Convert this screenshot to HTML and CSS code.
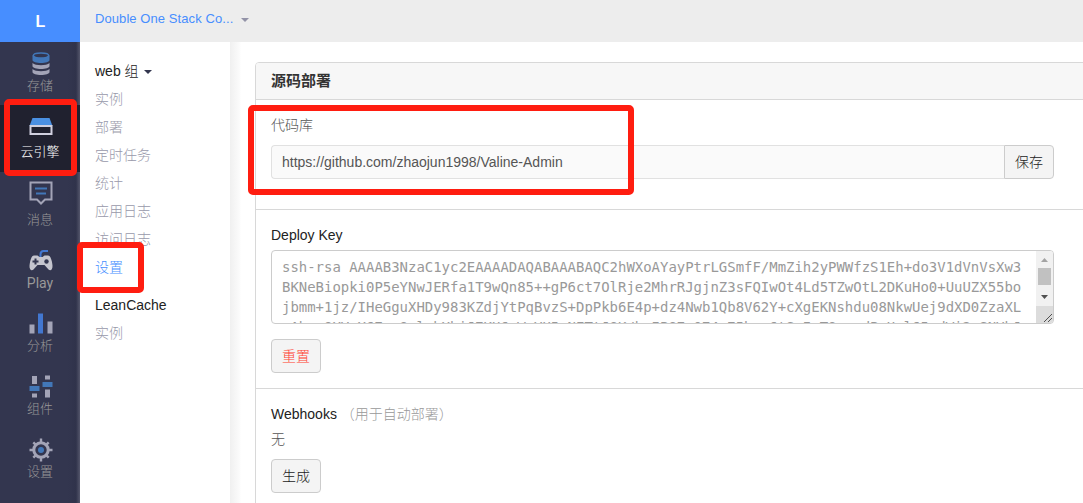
FILE: index.html
```
<!DOCTYPE html>
<html lang="zh-CN">
<head>
<meta charset="utf-8">
<title>云引擎 - 设置</title>
<link rel="stylesheet" href="styles.css">
</head>
<body>
<div class="app">
  <nav class="rail">
    <div class="logo">L</div>
    <a class="rail-item">
      <svg width="24" height="24" viewBox="0 0 24 24"><path d="M3.500 17v3c0 4 17 4 17 0v-3c-3 3-14 3-17 0z" fill="#a3a4b7"/><path d="M3.500 11v3c0 4 17 4 17 0v-3c-3 3-14 3-17 0z" fill="#a3a4b7"/><path d="M3.500 3.500v4.500c0 4 17 4 17 0v-4.500z" fill="#4277b8"/><ellipse cx="12" cy="3.500" rx="7.700" ry="2.600" fill="#33364f" stroke="#4277b8" stroke-width="1.500"/></svg>
      <span>存储</span>
    </a>
    <a class="rail-item active">
      <svg width="24" height="24" viewBox="0 0 24 24"><path d="M3.500 3h17l3 8H.5z" fill="#4a90e2"/><path d="M1.500 11h21v8h-21z" fill="#20212f" stroke="#d0d0df" stroke-width="2"/></svg>
      <span>云引擎</span>
    </a>
    <a class="rail-item message">
      <svg width="24" height="24" viewBox="0 0 24 24"><path d="M1.500 1.500h21v17h-6.500l-4 4-4-4H1.500z" fill="none" stroke="#a3a4b7" stroke-width="2"/><path d="M6 7.500h12M7 12.500h10" stroke="#4277b8" stroke-width="2"/></svg>
      <span>消息</span>
    </a>
    <a class="rail-item play">
      <svg width="24" height="24" viewBox="0 0 24 24"><path d="M11.500 8V5.500q0-3.500 3-3.500H19" fill="none" stroke="#4277d0" stroke-width="2"/><path d="M5 6.500h3.500L10.500 8h3l2-1.500H19c2.500 0 4 5 4.500 10 .3 4-2 6-4 4l-4-4.500h-7l-4 4.500c-2 2-4.300 0-4-4C1 11.500 2.500 6.500 5 6.500z" fill="#c5c5ce"/><path d="M6.500 9.500v6M3.500 12.500h6" stroke="#33364f" stroke-width="2"/><circle cx="17.500" cy="12.500" r="2.200" fill="#33364f"/></svg>
      <span>Play</span>
    </a>
    <a class="rail-item">
      <svg width="24" height="24" viewBox="0 0 24 24"><path d="M.5 12.500h5v9h-5zM18.500 9.500h5v12h-5z" fill="#a3a4b7"/><path d="M9 1.500h5v20H9z" fill="#4277d0"/></svg>
      <span>分析</span>
    </a>
    <a class="rail-item">
      <svg width="24" height="24" viewBox="0 0 24 24"><path d="M3 1h5v8H3zM3 18.500h5v4H3zM16 .5h5v4h-5zM16 14.500h5v8h-5z" fill="#a3a4b7"/><path d="M.5 11h10v5H.5zM13.500 7h10v5h-10z" fill="#4277b8"/></svg>
      <span>组件</span>
    </a>
    <a class="rail-item">
      <svg width="24" height="24" viewBox="0 0 24 24"><circle cx="12" cy="12" r="7.200" fill="none" stroke="#a3a4b7" stroke-width="3"/><path d="M12 .5v4M12 19.500v4M.5 12h4M19.500 12h4M4.300 4.300l3 3M16.700 16.700l3 3M4.300 19.700l3-3M16.700 7.300l3-3" stroke="#a3a4b7" stroke-width="2.400" /><circle cx="12" cy="12" r="3" fill="#4277b8"/></svg>
      <span>设置</span>
    </a>
  </nav>
  <div class="workspace">
    <header class="topbar"><span>Double One Stack Co...</span><i class="caret"></i></header>
    <div class="columns">
      <aside class="submenu">
        <h4>web 组<i class="caret dark"></i></h4>
        <a>实例</a>
        <a>部署</a>
        <a>定时任务</a>
        <a>统计</a>
        <a>应用日志</a>
        <a>访问日志</a>
        <a class="current">设置</a>
        <h4 class="second">LeanCache</h4>
        <a>实例</a>
      </aside>
      <main>
        <section class="panel">
          <h3>源码部署</h3>
          <div class="repo">
            <label>代码库</label>
            <div class="input-group"><div class="field">https://github.com/zhaojun1998/Valine-Admin</div><button>保存</button></div>
          </div>
          <div class="deploy">
            <label>Deploy Key</label>
            <div class="keybox">
              <div class="key">ssh-rsa AAAAB3NzaC1yc2EAAAADAQABAAABAQC2hWXoAYayPtrLGSmfF/MmZih2yPWWfzS1Eh+do3V1dVnVsXw3<br>BKNeBiopki0P5eYNwJERfa1T9wQn85++gP6ct7OlRje2MhrRJgjnZ3sFQIwOt4Ld5TZwOtL2DKuHo0+UuUZX55bo<br>jbmm+1jz/IHeGguXHDy983KZdjYtPqBvzS+DpPkb6E4p+dz4Nwb1Qb8V62Y+cXgEKNshdu08NkwUej9dXD0ZzaXL<br>eAbsu8XVeX67ao8olabXbiJ7KU6cWaYU5eNETtJ8K/buIP87e074e75bcs6tSeIeT8esudPsUol65xdWi2eSNVbJ</div>
              <svg class="scroll" width="17" height="72" viewBox="0 0 17 72"><path d="M0 0h17v55H0z" fill="#f1f1f1"/><path d="M0 55h17v17H0z" fill="#dcdcdc"/><path d="M5 11l3.500-4 3.500 4z" fill="#a3a3a3"/><path d="M2 17h13v17H2z" fill="#c1c1c1"/><path d="M5 44h7l-3.500 4z" fill="#505050"/><path d="M8 71l8-8M12 71l4-4" stroke="#505050" stroke-width="1"/></svg>
            </div>
            <button class="danger">重置</button>
          </div>
          <div class="hooks">
            <label>Webhooks <span>（用于自动部署）</span></label>
            <p>无</p>
            <button>生成</button>
          </div>
        </section>
      </main>
    </div>
  </div>
  <div class="mark mark-engine"></div>
  <div class="mark mark-settings"></div>
  <div class="mark mark-repo"></div>
</div>
</body>
</html>
```
FILE: styles.css
```
* { box-sizing: border-box; }
body { margin: 0; overflow: hidden; background: #fff; font: 14px/20px "Liberation Sans", "Noto Sans CJK SC", sans-serif; font-weight: 300; color: #555; }
.app { position: relative; display: flex; width: 1083px; height: 503px; overflow: hidden; }
.rail { flex: none; width: 80px; background: linear-gradient(to right, #33364f 68px, #30334b 76px, #55576c 80px); }
.logo { height: 42px; padding-left: 1px; background: #478eff; color: #fff; font-weight: 700; font-size: 16px; line-height: 43px; text-align: center; }
.rail-item { display: flex; flex-direction: column; align-items: center; height: 63px; padding-top: 10px; font-size: 13px; line-height: 20px; color: #999; }
.rail-item svg { flex: none; margin-left: 1px; }
.rail-item.active { height: 67px; padding-top: 9px; background: #20212f; color: #fff; }
.rail-item.active span { padding-top: 3px; }
.rail-item.active svg { margin-top: 1px; }
.rail-item.message { height: 67px; padding-top: 9px; }
.rail-item.message span { padding-top: 5px; }
.rail-item.play { font-family: Roboto, sans-serif; font-size: 14px; font-weight: 400; }
.workspace { flex: 1; min-width: 0; display: flex; flex-direction: column; }
.topbar { flex: none; display: flex; align-items: center; height: 42px; padding: 0 15px 5px; background: #ededed; color: #478eff; font-size: 13px; letter-spacing: 0.08px; }
.caret { display: inline-block; border: 4px solid transparent; border-top-color: #9393a8; border-bottom: 0; margin: 3px 0 0 8px; }
.caret.dark { border-top-color: #33364f; margin: 0 0 2px 5px; }
.columns { flex: 1; display: flex; }
.submenu { flex: none; display: flex; flex-direction: column; width: 150px; padding: 15px 15px 0; }
.submenu h4 { margin: 0; font-weight: 300; line-height: 28px; color: #222; }
.submenu a { line-height: 28px; color: #9899aa; }
.submenu .current { color: #478eff; }
.submenu .second { margin-top: 10px; }
main { flex: 1; padding: 20px 0 0 25px; background: linear-gradient(to right, #f0f0f0, #fcfcfc 10px, #fff 11px); }
.panel { width: 840px; height: 500px; background: #fff; border: 1px solid #d8d8d8; border-radius: 4px; }
.panel h3 { margin: 0; height: 37px; padding-left: 15px; background: #f7f7f7; border-bottom: 1px solid #d8d8d8; border-radius: 3px 0 0; font-size: 15px; line-height: 36px; color: #333; }
.repo { height: 110px; padding: 15px 15px 0; border-bottom: 1px solid #d8d8d8; }
label { display: block; }
.input-group { display: flex; width: 783px; margin-top: 10px; }
.field { flex: 1; height: 34px; padding: 0 10px; background: #fafafa; border: 1px solid #e1e1e1; border-right: 0; border-radius: 4px 0 0 4px; line-height: 32px; }
button { display: block; width: 50px; height: 34px; padding: 0; border: 1px solid #ccc; border-radius: 4px; background: #f4f4f4; font: inherit; color: #222; }
.input-group button { border-radius: 0 4px 4px 0; }
.deploy { height: 179px; padding: 15px 15px 0; border-bottom: 1px solid #d8d8d8; }
.deploy label, .hooks label { color: #222; }
.keybox { display: flex; justify-content: space-between; width: 783px; height: 74px; margin: 5px 0 15px; border: 1px solid #ccc; border-radius: 4px; overflow: hidden; }
.key { padding: 6px 0 0 10px; font: 13.960px/20px "DejaVu Sans Mono", monospace; color: #999; white-space: nowrap; }
button.danger { color: #ff4030; }
.hooks { padding: 15px 15px 0; }
.hooks label span { color: #999; }
.hooks p { margin: 5px 0 10px; }
.mark { position: absolute; border: 6px solid #ff1d10; border-radius: 5px; }
.mark-engine { left: 4px; top: 99px; width: 73px; height: 77px; }
.mark-settings { left: 77px; top: 242px; width: 67px; height: 51px; }
.mark-repo { left: 248px; top: 105px; width: 386px; height: 90px; }
```
